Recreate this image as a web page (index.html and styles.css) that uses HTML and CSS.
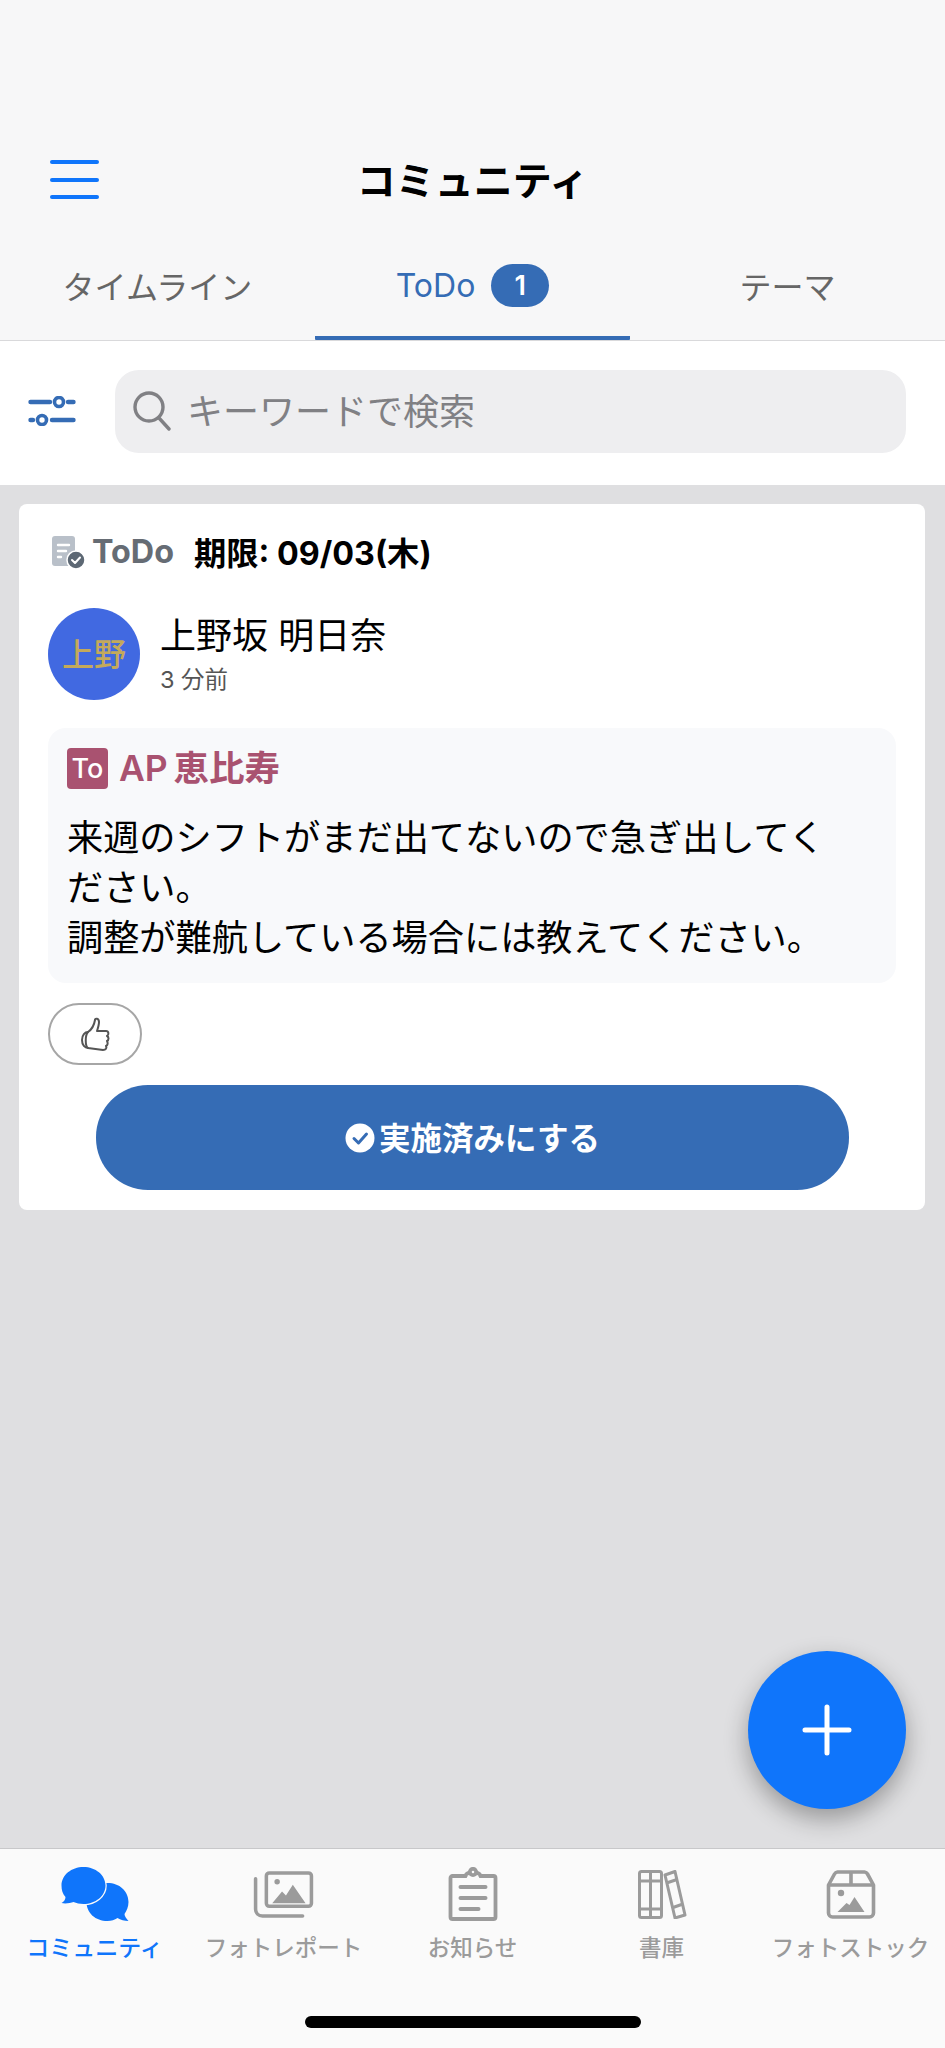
FILE: index.html
```html
<!DOCTYPE html>
<html lang="ja">
  <head>
    <meta charset="UTF-8" />
    <meta name="viewport" content="width=device-width, initial-scale=1.0" />
    <title>コミュニティ</title>
    <link rel="stylesheet" href="styles.css">
  </head>
  <body>
    <header class="top-bar">
      <button class="menu-button" aria-label="menu"><span></span><span></span><span></span></button>
      <h1>コミュニティ</h1>
    </header>

    <nav class="tabs">
      <a class="tab">タイムライン</a>
      <a class="tab active">ToDo<span class="tab-badge">1</span></a>
      <a class="tab">テーマ</a>
    </nav>

    <div class="search-row">
      <svg class="filter-icon" viewBox="0 0 48 30" fill="none" stroke="#356cb5" stroke-width="4.400" stroke-linecap="round">
        <path d="M2.500 6H22M40 6h5.500M2.500 24H5M24 24h21.500" />
        <circle cx="31" cy="6" r="4.500" stroke-width="3.600" />
        <circle cx="14" cy="24" r="4.500" stroke-width="3.600" />
      </svg>
      <div class="search-box">
        <svg class="search-icon" viewBox="0 0 38 40" fill="none" stroke="#808084" stroke-width="3.400" stroke-linecap="round">
          <circle cx="16" cy="16" r="14" />
          <path d="M26 27l10 11" />
        </svg>
        <span>キーワードで検索</span>
      </div>
    </div>

    <main class="feed">
      <article class="card">
        <div class="card-head">
          <svg class="todo-icon" viewBox="0 0 33 33">
            <rect x="0" y="0" width="23" height="30" rx="3" fill="#b9c0c9" />
            <path d="M6 9h11M6 15h8M6 21h3" stroke="#fff" stroke-width="2.400" stroke-linecap="round" />
            <circle cx="24" cy="24" r="9" fill="#5d6874" stroke="#fff" stroke-width="1.500" />
            <path d="M20 24l3 3 5-5.500" fill="none" stroke="#fff" stroke-width="2" stroke-linecap="round" stroke-linejoin="round" />
          </svg>
          <span class="todo-label">ToDo</span>
          <span class="due">期限: 09/03(木)</span>
        </div>

        <div class="author">
          <div class="avatar">上野</div>
          <div>
            <div class="author-name">上野坂 明日奈</div>
            <div class="author-time">3 分前</div>
          </div>
        </div>

        <div class="message">
          <div class="shop">
            <span class="shop-badge">To</span>
            <span>AP&#8201;恵比寿</span>
          </div>
          <p>来週のシフトがまだ出てないので急ぎ出してください。<br>調整が難航している場合には教えてください。</p>
        </div>

        <button class="like-button" aria-label="like">
          <svg viewBox="0 0 34 34" fill="none" stroke="#555" stroke-width="2" stroke-linejoin="round" stroke-linecap="round">
            <path d="M10 15c-3 0-6 3-6 8 0 5 3 8 6 8" />
            <path d="M10 31c-3-2-3-13 0-16 3-2 6-6 7-12 0-2 4-2 4 2 0 3-1 6-2 9h9c3 0 3 4 1 5 2 1 2 4 0 5 1 2 1 4-1 5 1 2 0 4-3 4z" />
          </svg>
        </button>

        <button class="done-button">
          <svg viewBox="0 0 30 30">
            <circle cx="15" cy="15" r="14.500" fill="#fff" />
            <path d="M9 15.500l4.500 4.500 8-9" fill="none" stroke="#356cb5" stroke-width="3" stroke-linecap="round" stroke-linejoin="round" />
          </svg>
          <span>実施済みにする</span>
        </button>
      </article>
    </main>

    <button class="fab" aria-label="add">
      <svg viewBox="0 0 50 52" fill="none" stroke="#fff" stroke-width="5" stroke-linecap="round">
        <path d="M25 3v46M3 26h44" />
      </svg>
    </button>

    <footer class="bottom-nav">
      <a class="nav-item active">
        <svg viewBox="0 0 69 54" fill="#0f75fb">
          <path d="M47 16c12 0 21 8 21 19 0 5-2 9-4 12 0 2 2 5 4 7-4 0-8-1-11-3-3 2-6 3-10 3-12 0-21-8-21-19s9-19 21-19z" />
          <path d="M23 0c12 0 22 8 22 18.500S35 37 23 37c-4 0-7-1-10-2-3 1-8 2-12 1 2-1 4-3 4-6-3-3-4-7-4-11.500C1 8 11 0 23 0z" stroke="#fafafa" stroke-width="2.500" paint-order="stroke" />
        </svg>
        <span>コミュニティ</span>
      </a>
      <a class="nav-item">
        <svg class="icon-short" viewBox="0 0 62 50" fill="none" stroke="#9b9b9b" stroke-width="3.600" stroke-linecap="round" stroke-linejoin="round">
          <path d="M2 9v31c0 4 3 7 7 7h41" />
          <rect x="13" y="3" width="46" height="34" rx="3" />
          <circle cx="24" cy="12" r="2.800" fill="#9b9b9b" stroke="none" />
          <path d="M19 34l10-12 4 4 7-11 13 19z" fill="#9b9b9b" stroke="none" />
        </svg>
        <span>フォトレポート</span>
      </a>
      <a class="nav-item">
        <svg viewBox="0 0 49 54" fill="none" stroke="#9b9b9b" stroke-width="3.800" stroke-linecap="round" stroke-linejoin="round">
          <path d="M17 9H4a2 2 0 0 0-2 2v39a2 2 0 0 0 2 2h41a2 2 0 0 0 2-2V11a2 2 0 0 0-2-2H32" />
          <path d="M17 9c0-2 2-3 4-3M28 6c2 0 4 1 4 3" />
          <circle cx="24.500" cy="5" r="3.200" />
          <path d="M12 20h25M12 31h25M12 42h18" stroke-width="4" />
        </svg>
        <span>お知らせ</span>
      </a>
      <a class="nav-item">
        <svg class="icon-short" viewBox="0 0 48 49" fill="none" stroke="#9b9b9b" stroke-width="3" stroke-linejoin="round">
          <rect x="1.500" y="1.500" width="22" height="46" rx="2" />
          <path d="M12.500 1.500v46M1.500 11h22M1.500 39h22" />
          <path d="M27 5l10-3.500L47 45l-10 3z" />
          <path d="M28.500 13L39 9.500M35 37.500L45 34" />
        </svg>
        <span>書庫</span>
      </a>
      <a class="nav-item">
        <svg class="icon-short" viewBox="0 0 49 49" fill="none" stroke="#9b9b9b" stroke-width="3.600" stroke-linejoin="round">
          <path d="M2 15L8 4a4 4 0 0 1 3-2h27a4 4 0 0 1 3 2l6 11v28a4 4 0 0 1-4 4H6a4 4 0 0 1-4-4z" />
          <path d="M2 15h45M24.500 2v13" />
          <circle cx="14.500" cy="23" r="3.200" fill="#9b9b9b" stroke="none" />
          <path d="M11 42l9-9 3 2 5-8 10 15z" fill="#9b9b9b" stroke="none" />
        </svg>
        <span>フォトストック</span>
      </a>
      <div class="home-bar"></div>
    </footer>
  </body>
</html>
```

FILE: styles.css
```css
:root {
  --blue: #356cb5;
  --bright-blue: #0f75fb;
  --bar-bg: #f7f7f8;
  --feed-bg: #dfdfe1;
  --rose: #a95270;
}
* {
  box-sizing: border-box;
}
html,
body {
  margin: 0;
  padding: 0;
}
body {
  position: relative;
  width: 945px;
  height: 2048px;
  display: flex;
  flex-direction: column;
  overflow: hidden;
  background: var(--feed-bg);
  color: #000;
  font-family: Inter, "Noto Sans CJK JP", sans-serif;
}
button {
  font-family: inherit;
  border: none;
  padding: 0;
  cursor: pointer;
}

.top-bar {
  position: relative;
  height: 227px;
  padding-top: 158px;
  background: var(--bar-bg);
  text-align: center;
}
.top-bar h1 {
  margin: 0;
  font-size: 39px;
  line-height: 46px;
  font-weight: 700;
}
.menu-button {
  position: absolute;
  left: 50px;
  top: 160px;
  width: 49px;
  height: 39px;
  display: flex;
  flex-direction: column;
  justify-content: space-between;
  background: none;
}
.menu-button span {
  height: 4px;
  border-radius: 2px;
  background: var(--bright-blue);
}

.tabs {
  height: 114px;
  display: grid;
  grid-template-columns: 315px 315px 315px;
  background: var(--bar-bg);
  border-bottom: 1px solid #d9d9db;
}
.tab {
  display: flex;
  align-items: center;
  justify-content: center;
  gap: 16px;
  padding-top: 3px;
  font-size: 32px;
  color: #666;
}
.tab.active {
  color: var(--blue);
  border-bottom: 4px solid var(--blue);
  border-radius: 0 0 1px 1px;
  padding-top: 7px;
}
.tab-badge {
  width: 58px;
  height: 43px;
  border-radius: 22px;
  display: flex;
  align-items: center;
  justify-content: center;
  background: var(--blue);
  color: #fff;
  font-size: 27px;
  font-weight: 600;
}

.search-row {
  height: 144px;
  display: flex;
  align-items: center;
  gap: 39px;
  padding: 0 39px 4px 28px;
  background: #fff;
}
.filter-icon {
  width: 48px;
  height: 30px;
  flex: none;
}
.search-box {
  flex: 1;
  height: 83px;
  display: flex;
  align-items: center;
  gap: 16px;
  padding-left: 18px;
  border-radius: 24px;
  background: #eeeef0;
  color: #808084;
  font-size: 36px;
}
.search-box span {
  padding-bottom: 4px;
}
.search-icon {
  width: 38px;
  height: 40px;
  flex: none;
}

.feed {
  flex: 1;
  padding: 19px 20px 0 19px;
}
.card {
  height: 706px;
  padding: 27px 29px 0;
  background: #fff;
  border-radius: 8px;
}
.card-head {
  height: 40px;
  display: flex;
  align-items: center;
  font-size: 32.300px;
  font-weight: 700;
}
.todo-icon {
  width: 33px;
  height: 33px;
  margin: 2px 7px 0 4px;
  flex: none;
}
.todo-label {
  color: #666c74;
  margin-right: 20px;
}

.author {
  display: flex;
  align-items: center;
  gap: 20px;
  margin-top: 37px;
}
.avatar {
  width: 92px;
  height: 92px;
  flex: none;
  display: flex;
  align-items: center;
  justify-content: center;
  padding-bottom: 4px;
  border-radius: 50%;
  background: #4169e1;
  color: #c4a95a;
  font-size: 32px;
  font-weight: 500;
}
.author-name {
  font-size: 36px;
  line-height: 50px;
}
.author-time {
  margin-top: 2px;
  font-size: 23.500px;
  line-height: 34px;
  color: #555;
}

.message {
  height: 255px;
  margin-top: 28px;
  padding: 19px 19px 0;
  border-radius: 18px;
  background: #f8f9fb;
}
.shop {
  display: flex;
  align-items: center;
  gap: 11px;
  color: var(--rose);
  font-size: 35.500px;
  font-weight: 600;
  line-height: 42px;
}
.shop span:last-child {
  padding-top: 1px;
}
.shop-badge {
  width: 41px;
  height: 41px;
  flex: none;
  display: flex;
  align-items: center;
  justify-content: center;
  border-radius: 4px;
  background: var(--rose);
  color: #fff;
  font-size: 27px;
  font-weight: 500;
}
.message p {
  margin: 23px 0 0;
  width: 790px;
  font-size: 36.200px;
  line-height: 50px;
}

.like-button {
  display: flex;
  align-items: center;
  justify-content: center;
  width: 94px;
  height: 62px;
  margin-top: 20px;
  border: 2px solid #a6a6a6;
  border-radius: 31px;
  background: #fff;
}
.like-button svg {
  width: 34px;
  height: 34px;
}

.done-button {
  display: flex;
  align-items: center;
  justify-content: center;
  gap: 4px;
  width: 753px;
  height: 105px;
  margin: 20px 0 0 48px;
  border-radius: 52px;
  background: var(--blue);
  color: #fff;
  font-size: 31.500px;
  font-weight: 700;
}
.done-button span {
  padding-bottom: 4px;
}
.done-button svg {
  width: 30px;
  height: 30px;
}

.fab {
  position: absolute;
  left: 748px;
  top: 1651px;
  width: 158px;
  height: 158px;
  display: flex;
  align-items: center;
  justify-content: center;
  border-radius: 50%;
  background: var(--bright-blue);
  box-shadow: 0 10px 24px rgba(0, 0, 0, 0.32);
}
.fab svg {
  width: 50px;
  height: 52px;
}

.bottom-nav {
  position: relative;
  height: 200px;
  display: grid;
  grid-template-columns: repeat(5, 1fr);
  background: #fafafa;
  border-top: 1px solid #c8c8ca;
}
.nav-item {
  display: flex;
  flex-direction: column;
  align-items: center;
  height: 120px;
  padding-top: 18px;
  color: #9b9b9b;
  font-size: 22.500px;
  font-weight: 500;
  white-space: nowrap;
}
.nav-item svg {
  height: 54px;
  width: 72px;
  margin-bottom: 11px;
}
.nav-item svg.icon-short {
  height: 49px;
  margin-top: 3px;
  margin-bottom: 13px;
}
.nav-item span {
  line-height: 32px;
}
.nav-item.active {
  color: var(--bright-blue);
  font-size: 23px;
}
.home-bar {
  position: absolute;
  left: 305px;
  top: 167px;
  width: 336px;
  height: 12px;
  border-radius: 6px;
  background: #000;
}
```
